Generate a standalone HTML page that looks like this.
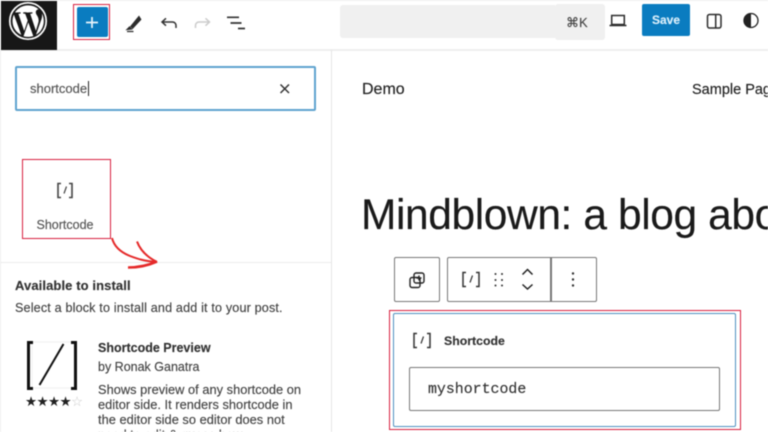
<!DOCTYPE html>
<html><head><meta charset="utf-8"><style>
html,body{margin:0;padding:0;background:#fff}
#p{position:relative;width:768px;height:432px;overflow:hidden;background:#fff;font-family:"Liberation Sans",sans-serif;color:#2c2c2c;filter:blur(.4px)}
#p div,#p svg{position:absolute}
.t{white-space:nowrap;-webkit-text-stroke:.15px currentColor}
</style></head><body><div id="p">
<div style="left:0;top:0;width:768px;height:1px;background:#eee"></div>
<div style="left:0;top:49px;width:768px;height:2px;background:#eee"></div>
<div style="left:0;top:50px;width:1px;height:382px;background:#eee"></div>
<div style="left:331px;top:50px;width:1px;height:382px;background:#e6e6e6"></div>
<div style="left:1px;top:1px;width:56px;height:49px;background:#171717"></div>
<svg style="left:8px;top:1px" width="40" height="40" viewBox="0 0 40 40"><circle cx="20" cy="20" r="18.200" fill="none" stroke="#fff" stroke-width="1.700"/><path fill="#fff" d="M4.500 20c0 6.200 3.600 11.500 8.800 14L5.900 13.600C5 15.600 4.500 17.700 4.500 20zM30.600 19.200c0-1.900-.7-3.300-1.300-4.300-.8-1.300-1.500-2.400-1.500-3.700 0-1.500 1.100-2.800 2.700-2.800h.2C28 5.800 24.200 4.400 20 4.400c-5.400 0-10.200 2.800-13 7 .4 0 .7 0 1 .1 1.600 0 4.100-.2 4.100-.2.800-.1.900 1.200.1 1.300 0 0-.8.100-1.800.1l5.800 17.200 3.500-10.400-2.500-6.800c-.8 0-1.600-.1-1.600-.1-.8-.1-.7-1.300.1-1.300 0 0 2.600.2 4.100.2 1.600 0 4.100-.2 4.100-.2.800-.1.900 1.200.1 1.300 0 0-.8.100-1.800.1l5.700 17.100 1.600-5.300c.7-2.200 1.200-3.800 1.200-5.200zM20.300 21.400l-4.800 13.900c1.400.4 2.900.6 4.500.6 1.900 0 3.600-.3 5.300-.9l-.1-.2zM34 12.400c.1.500.1 1.100.1 1.700 0 1.600-.3 3.400-1.200 5.700L28 33.800c4.700-2.700 7.800-7.800 7.800-13.800 0-2.800-.7-5.300-1.800-7.600z"/></svg>
<div style="left:73px;top:4px;width:37px;height:36px;border:1.500px solid #d8203f;box-sizing:border-box"></div>
<div style="left:76.500px;top:7px;width:31px;height:29.500px;background:#0a7cc0;border-radius:2px"></div>
<svg style="left:76px;top:7px" width="32" height="30"><path d="M16 10v11M10 15.500h12" stroke="#e8f4fb" stroke-width="1.700"/></svg>
<svg style="left:124px;top:12px" width="124" height="24" fill="none"><path d="M6 14.500l2.700 2.500L17.500 7.500 15 3.500z" fill="#2c2c2c"/><path d="M3 17.500l2.500-2.500 2 2zM3 19.500h6.500" fill="#2c2c2c" stroke="#2c2c2c" stroke-width="1.200"/><path d="M38 10h10.500c2 0 3.500 1.500 3.500 3.500V16M42 6.300L38 10l4 3.700" stroke="#333" stroke-width="1.500"/><path d="M85.500 10H75c-2 0-3.500 1.500-3.500 3.500V16M81.500 6.300l4 3.700-4 3.700" stroke="#ccc" stroke-width="1.500"/><path d="M103 4.800h12M106.500 10.500h11M114 16h7" stroke="#333" stroke-width="1.700" transform="translate(0 .5)"/></svg>
<div style="left:340px;top:5px;width:215px;height:33px;background:#f0f0f0;border-radius:3px 0 0 3px"></div>
<div style="left:555px;top:4px;width:50px;height:36px;background:#f0f0f0;border-radius:3px"></div>
<div class="t" style="left:566px;top:15px;font-size:13px;line-height:16px;color:#444">⌘K</div>
<svg style="left:608px;top:10px" width="20" height="20" fill="none"><path d="M3.700 5.500h12.600v9H3.700z" stroke="#2c2c2c" stroke-width="1.500"/><path d="M1.500 15.500h17" stroke="#2c2c2c" stroke-width="1.500"/></svg>
<div style="left:642px;top:3.500px;width:48px;height:32.500px;background:#0a7cc0;border-radius:2px"></div>
<div class="t" style="left:642px;top:12px;width:48px;text-align:center;font-size:12px;line-height:16px;font-weight:700;color:#d9eefa">Save</div>
<svg style="left:704px;top:11px" width="64" height="22" fill="none"><rect x="3.500" y="3.500" width="13.500" height="13.500" rx="2" stroke="#2c2c2c" stroke-width="1.500"/><path d="M11.700 4v13" stroke="#2c2c2c" stroke-width="1.500"/><circle cx="47" cy="9.500" r="7" stroke="#222" stroke-width="1.300"/><path d="M47 2.500a7 7 0 0 0 0 14z" fill="#222"/></svg>

<div style="left:15px;top:66px;width:301px;height:45px;border:2px solid #5fa3cf;border-radius:2px;box-sizing:border-box"></div>
<div class="t" style="left:30px;top:81px;font-size:13px;line-height:16px;color:#555">shortcode</div>
<div style="left:88px;top:81px;width:1px;height:15px;background:#222"></div>
<svg style="left:278px;top:82px" width="14" height="14"><path d="M2.500 2.500l8.500 8.500M11 2.500l-8.500 8.500" stroke="#333" stroke-width="1.500"/></svg>

<div style="left:22px;top:159px;width:89px;height:80px;border:1.200px solid #d8203f;box-sizing:border-box"></div>
<svg style="left:56px;top:182px" width="18" height="17" fill="none" stroke="#444"><path d="M5 1.500H2v14h3M13 1.500h3v14h-3" stroke-width="1.600"/><path d="M10.500 4.500L8 11.500" stroke-width="1.200"/></svg>
<div class="t" style="left:22px;top:218px;width:86px;text-align:center;font-size:12.500px;line-height:14px;color:#555">Shortcode</div>
<div style="left:0;top:262px;width:331px;height:1px;background:#ececec"></div>
<svg style="left:105px;top:235px" width="60" height="36" fill="none" stroke="#e52a2a"><path d="M7 3c2 8 8 14 18 18 8 3 14 5 27 6" stroke-width="2"/><path d="M32 6.500c3 8 9 15 20 20.500" stroke-width="2"/><path d="M23 32.500c10 0 20-2 29-6" stroke-width="2.600"/></svg>

<div class="t" style="left:15px;top:278px;font-size:13px;line-height:16px;font-weight:700;color:#333;letter-spacing:.1px">Available to install</div>
<div class="t" style="left:15px;top:300px;font-size:12.600px;line-height:16px;color:#444;letter-spacing:.16px">Select a block to install and add it to your post.</div>
<svg style="left:24px;top:338px" width="56" height="56" fill="none"><rect x="8" y="4" width="42" height="46" stroke="#f0f0f0"/><path d="M9 4.500H4.500v46H9M47 4.500h4.500v46H47" stroke="#111" stroke-width="3"/><path d="M39.500 6L15.500 47" stroke="#111" stroke-width="2"/></svg>
<div class="t" style="left:25px;top:395px;font-size:13.500px;line-height:14px;color:#222;letter-spacing:-.6px;-webkit-text-stroke:0">★★★★<span style="color:#ccc">☆</span></div>
<div class="t" style="left:98px;top:340px;font-size:12.500px;line-height:16px;font-weight:700;color:#333">Shortcode Preview</div>
<div class="t" style="left:98px;top:359px;font-size:12.500px;line-height:16px;color:#444">by Ronak Ganatra</div>
<div class="t" style="left:98px;top:382px;font-size:12.800px;line-height:15px;color:#444;letter-spacing:.03px">Shows preview of any shortcode on<br>editor side. It renders shortcode in<br>the editor side so editor does not<br>need to edit & guess how</div>

<div class="t" style="left:362px;top:81px;font-size:16px;line-height:18px;color:#222">Demo</div>
<div class="t" style="left:692px;top:81px;font-size:14.500px;line-height:18px;color:#222">Sample Page</div>
<div class="t" style="left:361px;top:191px;font-size:42.500px;line-height:50px;letter-spacing:-.4px;color:#1a1a1a">Mindblown: a blog about</div>

<div style="left:394px;top:257px;width:46px;height:45px;border:1.500px solid #777;border-radius:2px;box-sizing:border-box"></div>
<svg style="left:407px;top:271px" width="20" height="20" fill="none" stroke="#222" stroke-width="1.400"><rect x="7" y="2" width="10" height="10" rx="2"/><rect x="3" y="6.500" width="10" height="10" rx="2"/><path d="M12 4.500v5M9.500 7h5"/></svg>
<div style="left:447px;top:257px;width:150px;height:45px;border:1.500px solid #777;border-radius:2px;box-sizing:border-box"></div>
<div style="left:550px;top:257px;width:1.500px;height:45px;background:#777"></div>
<svg style="left:461px;top:271px" width="20" height="17" fill="none" stroke="#333"><path d="M5 1.500H2v14h3M15 1.500h3v14h-3" stroke-width="1.500"/><path d="M11.500 4.500L9 11.500" stroke-width="1.200"/></svg>
<svg style="left:490px;top:268px" width="50" height="28" fill="none"><g fill="#333"><circle cx="5.500" cy="6" r="1"/><circle cx="12" cy="6" r="1"/><circle cx="5.500" cy="12" r="1"/><circle cx="12" cy="12" r="1"/><circle cx="5.500" cy="17.500" r="1"/><circle cx="12" cy="17.500" r="1"/></g><path d="M32.500 6.500l5-5 5 5M32.500 16.500l5 4.500 5-4.500" stroke="#222" stroke-width="1.500"/></svg>
<svg style="left:567px;top:270px" width="12" height="20" fill="#333"><circle cx="6" cy="3.500" r="1.200"/><circle cx="6" cy="9.500" r="1.200"/><circle cx="6" cy="15.500" r="1.200"/></svg>

<div style="left:389px;top:310px;width:352px;height:120px;border:1.500px solid #d8203f;box-sizing:border-box"></div>
<div style="left:393px;top:313px;width:343px;height:114px;border:1.500px solid #4f8fbf;border-radius:2px;box-sizing:border-box"></div>
<svg style="left:412px;top:332px" width="20" height="17" fill="none" stroke="#333"><path d="M5 1.500H2v14h3M15 1.500h3v14h-3" stroke-width="1.500"/><path d="M11.500 4.500L9 11.500" stroke-width="1.200"/></svg>
<div class="t" style="left:444px;top:334px;font-size:12.300px;line-height:14px;font-weight:700;color:#333">Shortcode</div>
<div style="left:409px;top:367px;width:311px;height:44px;border:1.500px solid #777;border-radius:2px;box-sizing:border-box"></div>
<div class="t" style="left:428px;top:381px;font-family:'Liberation Mono',monospace;font-size:14.900px;line-height:18px;color:#333">myshortcode</div>
</div></body></html>
